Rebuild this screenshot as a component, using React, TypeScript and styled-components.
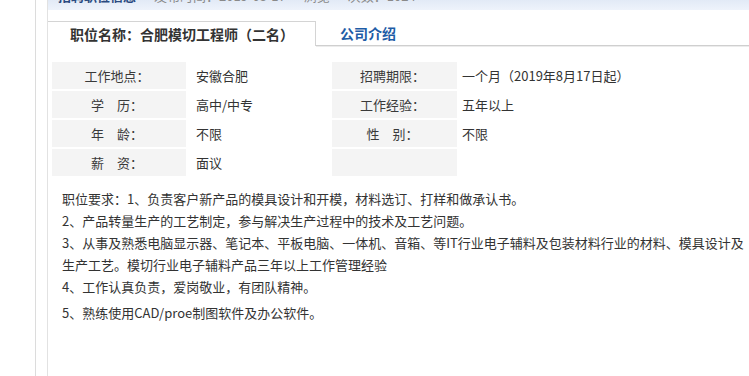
import React from "react";
import styled, { createGlobalStyle } from "styled-components";

const Global = createGlobalStyle`
  html, body { margin: 0; padding: 0; background: #fff; }
  body {
    font-family: "Noto Sans CJK SC", "Noto Sans", sans-serif;
    font-size: 13px;
    color: #333;
  }
`;

const Page = styled.div`
  min-height: 376px;
  padding-left: 35px;
  display: flex;
  overflow: hidden;
`;

const Gutter = styled.div`
  flex: 1;
  display: flex;
  border-left: 1px solid #dcdcdc;
  padding-left: 11px;
`;

const Main = styled.div`
  flex: 1;
  display: flex;
  flex-direction: column;
  border-left: 1px solid #e2e2e2;
  min-width: 0;
`;

const TopBar = styled.div`
  height: 10px;
  overflow: hidden;
  background: linear-gradient(#e2eaf6, #eef3fb);
  display: flex;
  gap: 18px;
  padding-left: 10px;
  white-space: nowrap;
`;

const TopText = styled.span<{ $bold?: boolean }>`
  margin-top: -11px;
  line-height: 13px;
  font-size: 13px;
  font-weight: ${(p) => (p.$bold ? 700 : 400)};
  color: ${(p) => (p.$bold ? "#2a4a80" : "#8a8a8a")};
`;

const TabBar = styled.div`
  margin-top: 11px;
  display: flex;
  height: 25px;
`;

const ActiveTab = styled.div`
  box-sizing: border-box;
  width: 268px;
  border-top: 1px solid #d4d4d4;
  border-right: 1px solid #d4d4d4;
  background: #fff;
  display: flex;
  align-items: center;
  padding-left: 22px;
  font-size: 14px;
  font-weight: 700;
  color: #333;
  white-space: nowrap;
`;

const Tab = styled.div`
  flex: 1;
  border-bottom: 1px solid #cfcfcf;
  box-shadow: 0 1px 0 #ececec;
  display: flex;
  align-items: center;
  padding-left: 24px;
  font-size: 14px;
  font-weight: 700;
  color: #1e5ca6;
  white-space: nowrap;
`;

const InfoGrid = styled.div`
  margin: 16px 0 0 4px;
  display: grid;
  grid-template-columns: 134px 146px 125px 1fr;
  grid-auto-rows: 27px;
  row-gap: 2px;
  width: 690px;
`;

const Label = styled.div`
  background: #f4f4f4;
  display: flex;
  align-items: center;
  justify-content: center;
  color: #3a3a3a;
  white-space: pre;
  padding-right: 4px;
`;

const Value = styled.div<{ $pad?: number }>`
  display: flex;
  align-items: center;
  padding-left: ${(p) => p.$pad ?? 10}px;
  color: #333;
  white-space: nowrap;
`;

const Desc = styled.div`
  margin-top: 12px;
  padding-left: 14px;
  line-height: 22px;
  white-space: nowrap;
  color: #333;
`;

const Para = styled.div<{ $gap?: number }>`
  margin-top: ${(p) => p.$gap ?? 0}px;
`;

const rows: [string, string, string, string][] = [
  ["工作地点：", "安徽合肥", "招聘期限：", "一个月（2019年8月17日起）"],
  ["学　历：", "高中/中专", "工作经验：", "五年以上"],
  ["年　龄：", "不限", "性　别：", "不限"],
  ["薪　资：", "面议", "", ""],
];

export default function App() {
  return (
    <>
      <Global />
      <Page>
        <Gutter>
          <Main>
            <TopBar>
              <TopText $bold>招聘职位信息</TopText>
              <TopText>发布时间：2019-08-17</TopText>
              <TopText>浏览</TopText>
              <TopText>次数：1024</TopText>
            </TopBar>
            <TabBar>
              <ActiveTab>职位名称：合肥模切工程师（二名）</ActiveTab>
              <Tab>公司介绍</Tab>
            </TabBar>
            <InfoGrid>
              {rows.map((r, i) => (
                <React.Fragment key={i}>
                  <Label>{r[0]}</Label>
                  <Value>{r[1]}</Value>
                  <Label>{r[2]}</Label>
                  <Value $pad={5}>{r[3]}</Value>
                </React.Fragment>
              ))}
            </InfoGrid>
            <Desc>
              <Para>职位要求：1、负责客户新产品的模具设计和开模，材料选订、打样和做承认书。</Para>
              <Para>2、产品转量生产的工艺制定，参与解决生产过程中的技术及工艺问题。</Para>
              <Para>
                3、从事及熟悉电脑显示器、笔记本、平板电脑、一体机、音箱、等IT行业电子辅料及包装材料行业的材料、模具设计及
                <br />
                生产工艺。模切行业电子辅料产品三年以上工作管理经验
              </Para>
              <Para>4、工作认真负责，爱岗敬业，有团队精神。</Para>
              <Para $gap={4}>5、熟练使用CAD/proe制图软件及办公软件。</Para>
            </Desc>
          </Main>
        </Gutter>
      </Page>
    </>
  );
}
